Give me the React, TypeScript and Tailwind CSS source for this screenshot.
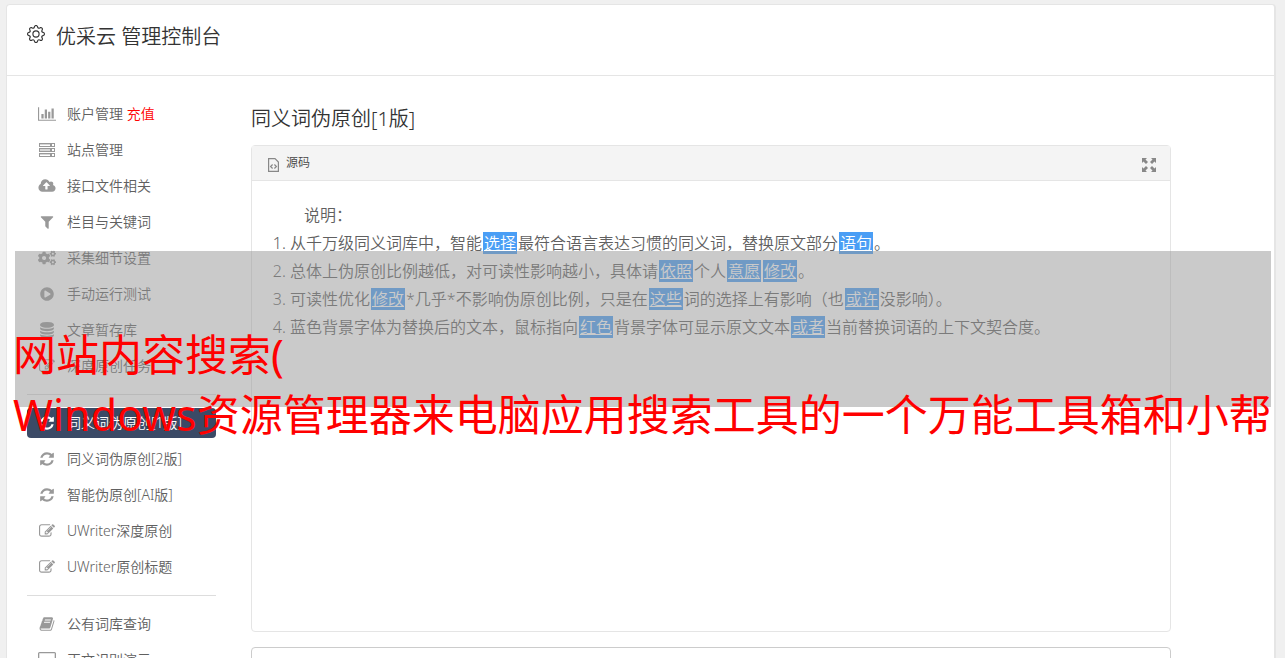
import type { ReactNode } from "react";
import { BsGear } from "react-icons/bs";
import { FaCogs, FaPlayCircle } from "react-icons/fa";

type IconProps = {
  children: ReactNode;
  viewBox?: string;
  className?: string;
};

const Icon = ({ children, viewBox = "0 0 1792 1792", className = "size-4" }: IconProps) => (
  <svg aria-hidden="true" className={className} fill="currentColor" viewBox={viewBox}>
    {children}
  </svg>
);

const chartIcon = (
  <Icon className="h-4 w-[18px]" viewBox="0 0 2048 1792">
    <path d="M640 896v512h-256v-512h256zm384-512v1024h-256v-1024h256zm1024 1152v128h-2048v-1536h128v1408h1920zm-640-896v768h-256v-768h256zm384-384v1152h-256v-1152h256z" />
  </Icon>
);

const serverIcon = (
  <Icon className="h-[14px] w-4" viewBox="0 0 16 14">
    <path
      fillRule="evenodd"
      d="M0 0h16v4H0zM1 1h10v2H1zM13 1h2v2h-2zM0 5h16v4H0zM1 6h10v2H1zM13 6h2v2h-2zM0 10h16v4H0zM1 11h10v2H1zM13 11h2v2h-2z"
    />
    <path opacity=".4" d="M1 1h10v1H1zM1 6h10v2H1zM1 11h10v1H1z" />
  </Icon>
);

const cloudUploadIcon = (
  <Icon className="h-4 w-[18px]" viewBox="0 0 1920 1792">
    <path d="M1280 864q0-14-9-23l-352-352q-9-9-23-9t-23 9l-351 351q-10 12-10 24 0 14 9 23t23 9h224v352q0 13 9.500 22.500t22.500 9.500h192q13 0 22.500-9.500t9.500-22.500v-352h224q13 0 22.500-9.500t9.500-22.500zm640 288q0 159-112.500 271.500t-271.500 112.500h-1088q-185 0-316.500-131.500t-131.500-316.500q0-130 70-240t188-165q-2-30-2-43 0-212 150-362t362-150q156 0 285.500 87t188.500 231q71-62 166-62 106 0 181 75t75 181q0 76-41 138 130 31 213.500 135.500t83.500 238.500z" />
  </Icon>
);

const filterIcon = (
  <Icon>
    <path d="M1595 295q17 41-14 70l-493 493v742q0 42-39 59-13 5-25 5-27 0-45-19l-256-256q-19-19-19-45v-486l-493-493q-31-29-14-70 17-39 59-39h1280q42 0 59 39z" />
  </Icon>
);

const databaseIcon = (
  <Icon>
    <path d="M896 768q237 0 443-43t325-127v170q0 69-103 128t-280 93.500-385 34.500-385-34.500-280-93.500-103-128v-170q119 84 325 127t443 43zm0 768q237 0 443-43t325-127v170q0 69-103 128t-280 93.500-385 34.500-385-34.500-280-93.500-103-128v-170q119 84 325 127t443 43zm0-384q237 0 443-43t325-127v170q0 69-103 128t-280 93.500-385 34.500-385-34.500-280-93.500-103-128v-170q119 84 325 127t443 43zm0-1152q208 0 385 34.500t280 93.500 103 128v128q0 69-103 128t-280 93.500-385 34.500-385-34.500-280-93.500-103-128v-128q0-69 103-128t280-93.500 385-34.500z" />
  </Icon>
);

const editIcon = (
  <Icon>
    <path d="M888 1184l116-116-152-152-116 116v56h96v96h56zm440-720q-16-16-33 1l-350 350q-17 17-1 33t33-1l350-350q17-17 1-33zm80 594v190q0 119-84.500 203.500t-203.500 84.500h-832q-119 0-203.500-84.500t-84.500-203.500v-832q0-119 84.500-203.500t203.500-84.500h832q63 0 117 25 15 7 18 23 3 17-9 29l-49 49q-14 14-32 8-23-6-45-6h-832q-66 0-113 47t-47 113v832q0 66 47 113t113 47h832q66 0 113-47t47-113v-126q0-13 9-22l64-64q15-15 35-7t20 29zm-96-738l288 288-672 672h-288v-288zm444 132l-92 92-288-288 92-92q28-28 68-28t68 28l152 152q28 28 28 68t-28 68z" />
  </Icon>
);

const refreshIcon = (
  <Icon>
    <path d="M1639 1056q0 5-1 7-64 268-268 434.500t-478 166.500q-146 0-282.500-55t-243.500-157l-129 129q-19 19-45 19t-45-19-19-45v-448q0-26 19-45t45-19h448q26 0 45 19t19 45-19 45l-137 137q71 66 161 102t187 36q134 0 250-65t186-179q11-17 53-117 8-23 30-23h192q13 0 22.500 9.500t9.500 22.500zm25-800v448q0 26-19 45t-45 19h-448q-26 0-45-19t-19-45 19-45l138-138q-148-137-349-137-134 0-250 65t-186 179q-11 17-53 117-8 23-30 23h-199q-13 0-22.500-9.500t-9.500-22.500v-7q65-268 270-434.500t480-166.500q146 0 284 55.500t245 156.500l130-129q19-19 45-19t45 19 19 45z" />
  </Icon>
);

const bookIcon = (
  <Icon>
    <path d="M1703 478q40 57 18 129l-275 906q-19 64-76.500 107.500t-122.500 43.500h-923q-77 0-148.500-53.500t-99.500-131.500q-24-67-2-127 0-4 3-27t4-37q1-8-3-21.500t-3-19.500q2-11 8-21t16.500-23.500 16.500-23.500q23-38 45-91.500t30-91.500q3-10 .5-30t-.5-28q3-11 17-28t17-23q21-36 42-92t25-90q1-9-2.500-32t.5-28q4-13 22-30.500t22-22.500q19-26 42.500-84.500t27.500-96.500q1-8-3-25.500t-2-26.500q2-8 9-18t18-23 17-21q8-12 16.500-30.500t15-35 16-36 19.500-32 26.500-23.500 36-11.500 47.500 5.500l-1 3q38-9 51-9h761q74 0 114 56t18 130l-274 906q-36 119-71.500 153.500t-128.500 34.500h-869q-27 0-38 15-11 16-1 43 24 70 144 70h923q29 0 56-15.500t35-41.500l300-987q7-22 5-57 38 15 59 43zm-1064 2q-4 13 2 22.500t20 9.500h608q13 0 25.500-9.500t16.500-22.500l21-64q4-13-2-22.500t-20-9.500h-608q-13 0-25.500 9.500t-16.500 22.500zm-83 256q-4 13 2 22.500t20 9.500h608q13 0 25.500-9.500t16.500-22.500l21-64q4-13-2-22.500t-20-9.500h-608q-13 0-25.500 9.500t-16.500 22.500z" />
  </Icon>
);

const screenIcon = (
  <Icon className="h-4 w-[18px]" viewBox="0 0 18 16">
    <path
      fillRule="evenodd"
      d="M1.500 0h15A1.500 1.500 0 0 1 18 1.500v9a1.500 1.500 0 0 1-1.500 1.500H11v2h2v1H5v-1h2v-2H1.500A1.500 1.500 0 0 1 0 10.500v-9A1.500 1.500 0 0 1 1.500 0zM1.300 1.300v9.400h15.400V1.300z"
    />
  </Icon>
);

type MenuItem = {
  label: string;
  icon: ReactNode;
  extra?: string;
  active?: boolean;
};

const MENU_GROUPS: MenuItem[][] = [
  [
    { label: "账户管理", icon: chartIcon, extra: "充值" },
    { label: "站点管理", icon: serverIcon },
    { label: "接口文件相关", icon: cloudUploadIcon },
    { label: "栏目与关键词", icon: filterIcon },
    { label: "采集细节设置", icon: <FaCogs className="size-[18px]" /> },
    { label: "手动运行测试", icon: <FaPlayCircle className="size-[14px]" /> },
    { label: "文章暂存库", icon: databaseIcon },
    { label: "深度原创任务", icon: editIcon },
  ],
  [
    { label: "同义词伪原创[1版]", icon: refreshIcon, active: true },
    { label: "同义词伪原创[2版]", icon: refreshIcon },
    { label: "智能伪原创[AI版]", icon: refreshIcon },
    { label: "UWriter深度原创", icon: editIcon },
    { label: "UWriter原创标题", icon: editIcon },
  ],
  [
    { label: "公有词库查询", icon: bookIcon },
    { label: "正文识别演示", icon: screenIcon },
  ],
];

const Word = ({ children }: { children: string }) => (
  <a href="#word" className="mx-px bg-[#4a9ef5] px-px text-white underline">
    {children}
  </a>
);

function Sidebar() {
  return (
    <nav className="w-[189px] shrink-0 pt-[23px] text-sm text-[#606060]">
      {MENU_GROUPS.map((group, index) => (
        <ul
          key={group[0].label}
          className={
            index > 0
              ? "mt-[13px] flex flex-col gap-[6px] border-t border-[#ddd] pt-[13px]"
              : "flex flex-col gap-[6px]"
          }
        >
          {group.map((item) => (
            <li key={item.label}>
              <a
                href="#menu"
                className={
                  item.active
                    ? "flex h-[30px] items-center gap-[10px] rounded-sm bg-[#3b4a66] pl-[10px] text-white"
                    : "flex h-[30px] items-center gap-[10px] pl-[10px]"
                }
              >
                <span
                  className={
                    item.active
                      ? "flex w-5 justify-center text-white"
                      : "flex w-5 justify-center text-[#999]"
                  }
                >
                  {item.icon}
                </span>
                <span>
                  {item.label}
                  {item.extra ? <span className="text-[#f00]"> {item.extra}</span> : null}
                </span>
              </a>
            </li>
          ))}
        </ul>
      ))}
    </nav>
  );
}

function SourcePanel() {
  return (
    <section className="min-h-[487px] rounded-[4px] border border-[#e5e5e5]">
      <div className="flex h-[35px] items-center justify-between border-b border-[#e5e5e5] bg-[#f4f4f4] pr-[14px] pl-4">
        <button type="button" className="flex items-center gap-[7px] text-xs text-[#444]">
          <svg
            aria-hidden="true"
            className="mt-[3px] h-[14px] w-[11px]"
            viewBox="0 0 11 14"
            fill="none"
            stroke="#888"
            strokeWidth="1.2"
          >
            <path d="M.6.6h6.400l3.400 3.400v9.400H.6z" />
            <path d="M4.600 6.500 2.600 8.500l2 2M6.400 6.500l2 2-2 2" />
          </svg>
          源码
        </button>
        <button type="button" aria-label="全屏" className="mt-[3px] text-[#888]">
          <Icon className="size-[14px]" viewBox="0 0 14 14">
            <path d="M0 0h5L3.500 1.500 6 4 4 6 1.500 3.500 0 5zM14 0v5l-1.500-1.500L10 6 8 4l2.500-2.500L9 0zM0 14V9l1.500 1.500L4 8l2 2-2.500 2.500L5 14zM14 14H9l1.500-1.500L8 10l2-2 2.500 2.500L14 9z" />
          </Icon>
        </button>
      </div>

      <div className="px-5 pt-5 text-base leading-7 text-[#606060]">
        <p className="pl-8">说明：</p>
        <ol className="list-decimal pl-[18px]">
          <li>
            从千万级同义词库中，智能<Word>选择</Word>最符合语言表达习惯的同义词，替换原文部分
            <Word>语句</Word>。
          </li>
          <li>
            总体上伪原创比例越低，对可读性影响越小，具体请<Word>依照</Word>个人<Word>意愿</Word>
            <Word>修改</Word>。
          </li>
          <li>
            可读性优化<Word>修改</Word>*几乎*不影响伪原创比例，只是在<Word>这些</Word>
            词的选择上有影响（也<Word>或许</Word>没影响）。
          </li>
          <li>
            蓝色背景字体为替换后的文本，鼠标指向<Word>红色</Word>背景字体可显示原文文本
            <Word>或者</Word>当前替换词语的上下文契合度。
          </li>
        </ol>
      </div>
    </section>
  );
}

export default function App() {
  return (
    <div className="relative h-screen overflow-hidden bg-[#f0f0f0] pt-1 pr-[9px] pl-[6px] font-['Noto_Sans','Noto_Sans_CJK_SC',sans-serif]">
      <main className="min-h-full rounded-t-[4px] border border-r-2 border-[#e5e5e5] bg-white font-[350]">
        <header className="flex h-[71px] items-start gap-[11px] border-b border-[#e5e5e5] pt-[17px] pl-5 text-[#333]">
          <BsGear className="mt-[3px] size-[18px]" />
          <h1 className="text-xl leading-[30px]">优采云 管理控制台</h1>
        </header>

        <div className="flex gap-[35px] pl-5">
          <Sidebar />
          <div className="mr-[103px] min-w-0 flex-1 pt-7">
            <h2 className="mb-[11px] text-xl leading-[30px] text-[#333]">同义词伪原创[1版]</h2>
            <SourcePanel />
            <textarea
              aria-label="原文"
              className="mt-[15px] block h-40 w-full resize-none rounded-[4px] border border-[#ccc]"
            />
          </div>
        </div>
      </main>

      <div className="absolute top-[251px] right-[14px] left-[15px] h-[156px] bg-[#969696]/50 pt-[74px]">
        <p className="-ml-[2px] text-[43px] leading-[60px] font-normal whitespace-nowrap text-[#f00]">
          网站内容搜索(
          <br />
          Windows资源管理器来电脑应用搜索工具的一个万能工具箱和小帮
        </p>
      </div>
    </div>
  );
}
